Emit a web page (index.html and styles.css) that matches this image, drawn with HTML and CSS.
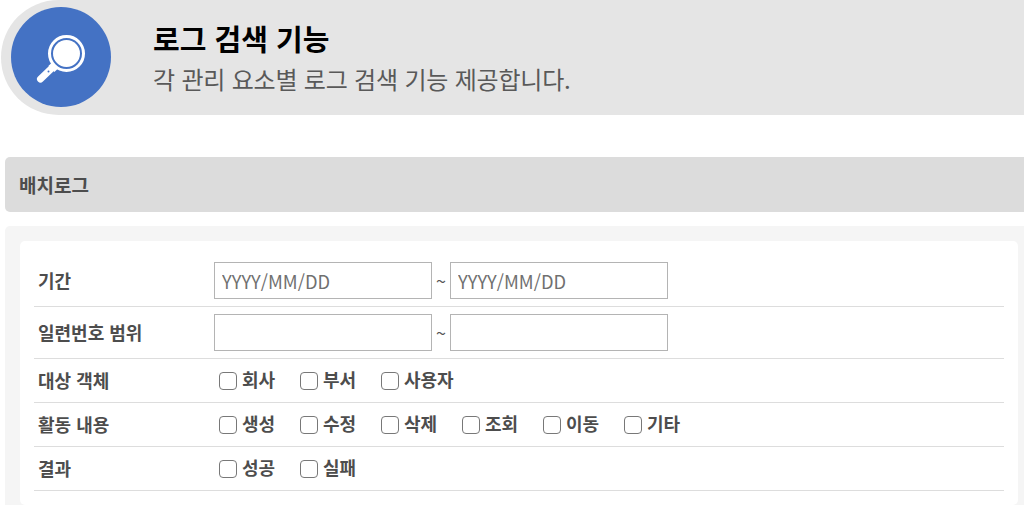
FILE: index.html
```html
<!DOCTYPE html>
<html lang="ko">
<head>
    <meta charset="UTF-8">
    <title>로그 검색 기능</title>
    <link rel="stylesheet" href="styles.css">
</head>
<body>
    <div class="banner">
        <div class="banner-icon">
            <svg width="52" height="52" viewBox="0 0 52 52">
                <circle cx="31.500" cy="22.500" r="17" fill="none" stroke="#fff" stroke-width="3"></circle>
                <circle cx="31.500" cy="22.500" r="13.500" fill="#fff"></circle>
                <path d="M5.500 48 L17 37" stroke="#fff" stroke-width="7" stroke-linecap="round"></path>
                <path d="M15.500 33 L21.500 39" stroke="#fff" stroke-width="6"></path>
                <circle cx="13.500" cy="40.500" r="1" fill="#4472c4"></circle>
            </svg>
        </div>
        <div class="banner-text">
            <h1>로그 검색 기능</h1>
            <p>각 관리 요소별 로그 검색 기능 제공합니다.</p>
        </div>
    </div>

    <div class="section-title">배치로그</div>

    <div class="panel">
        <div class="card">
            <div class="row row-input">
                <div class="row-label">기간</div>
                <input class="text-input" type="text" placeholder="YYYY/MM/DD">
                <span class="tilde">~</span>
                <input class="text-input" type="text" placeholder="YYYY/MM/DD">
            </div>
            <div class="row row-input">
                <div class="row-label">일련번호 범위</div>
                <input class="text-input" type="text">
                <span class="tilde">~</span>
                <input class="text-input" type="text">
            </div>
            <div class="row">
                <div class="row-label">대상 객체</div>
                <label class="check"><input type="checkbox"><span>회사</span></label>
                <label class="check"><input type="checkbox"><span>부서</span></label>
                <label class="check"><input type="checkbox"><span>사용자</span></label>
            </div>
            <div class="row">
                <div class="row-label">활동 내용</div>
                <label class="check"><input type="checkbox"><span>생성</span></label>
                <label class="check"><input type="checkbox"><span>수정</span></label>
                <label class="check"><input type="checkbox"><span>삭제</span></label>
                <label class="check"><input type="checkbox"><span>조회</span></label>
                <label class="check"><input type="checkbox"><span>이동</span></label>
                <label class="check"><input type="checkbox"><span>기타</span></label>
            </div>
            <div class="row">
                <div class="row-label">결과</div>
                <label class="check"><input type="checkbox"><span>성공</span></label>
                <label class="check"><input type="checkbox"><span>실패</span></label>
            </div>
        </div>
    </div>
</body>
</html>
```

FILE: styles.css
```css
html, body {
    height: 505px;
    overflow: hidden;
}
body {
    margin: 0;
    background-color: #fff;
    font-family: "Noto Sans CJK KR", "Noto Sans", sans-serif;
    color: #444;
}
.banner {
    display: flex;
    align-items: flex-start;
    height: 115px;
    margin-left: 1px;
    padding-left: 10px;
    background-color: #e5e5e5;
    border-radius: 58px 0 0 58px;
}
.banner-icon {
    display: flex;
    justify-content: center;
    align-items: center;
    flex: none;
    width: 100px;
    height: 100px;
    margin-top: 7px;
    background-color: #4472c4;
    border-radius: 50%;
}
.banner-text {
    margin-left: 42px;
    margin-top: 18px;
}
.banner-text h1 {
    margin: 0;
    font-size: 29px;
    line-height: 40px;
    font-weight: 700;
    color: #000;
}
.banner-text p {
    margin: 0;
    font-size: 24px;
    line-height: 42px;
    letter-spacing: -0.2px;
    color: #595959;
}
.section-title {
    display: flex;
    align-items: center;
    height: 55px;
    margin: 42px 0 14px 5px;
    padding-left: 14px;
    background-color: #dcdcdc;
    border-radius: 5px 0 0 5px;
    font-size: 19px;
    font-weight: 700;
    color: #4d4d4d;
}
.panel {
    margin-left: 5px;
    padding: 15px 6px 15px 15px;
    background-color: #f5f5f5;
    border-radius: 5px 0 0 5px;
}
.card {
    padding: 14px;
    background-color: #fff;
    border-radius: 5px;
}
.row {
    display: flex;
    align-items: center;
    height: 43px;
    border-bottom: 1px solid #ddd;
}
.row-input {
    height: 51px;
}
.row-label {
    flex: none;
    width: 176px;
    margin-top: -2px;
    padding-left: 4px;
    font-size: 18px;
    font-weight: 700;
    line-height: 24px;
    color: #4d4d4d;
}
.text-input {
    box-sizing: border-box;
    width: 218px;
    height: 37px;
    margin: 0;
    padding: 0 7px;
    border: 1px solid #b4b4b4;
    border-radius: 0;
    font-family: "Noto Sans CJK KR", "Noto Sans", sans-serif;
    font-size: 18.300px;
    color: #444;
}
.text-input::placeholder {
    color: #707070;
}
.tilde {
    width: 18px;
    margin-top: -2px;
    text-align: center;
    font-size: 18px;
    color: #555;
}
.check {
    display: flex;
    align-items: center;
    width: 81px;
    font-size: 18px;
    font-weight: 700;
    line-height: 24px;
    color: #4d4d4d;
}
.check span {
    margin-top: -3px;
}
.check input {
    flex: none;
    width: 18px;
    height: 18px;
    margin: 0 5px 0 5px;
    appearance: none;
    background-color: #fff;
    border: 1.500px solid #787878;
    border-radius: 4px;
}
```
